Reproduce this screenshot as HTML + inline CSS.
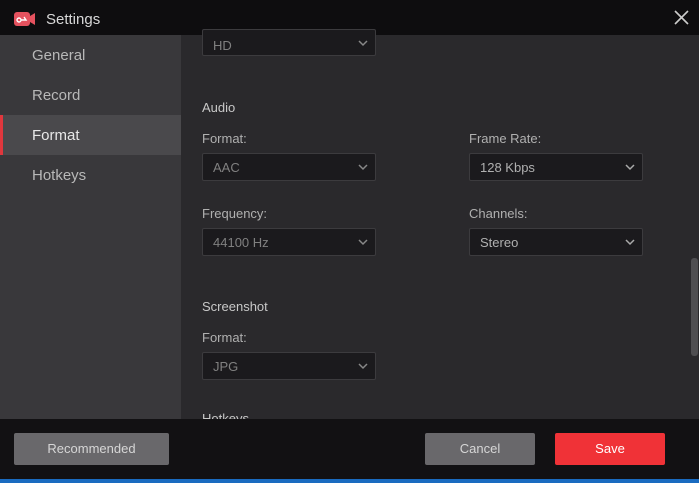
<!DOCTYPE html>
<html><head><style>
*{margin:0;padding:0;box-sizing:border-box}
body{width:699px;height:483px;overflow:hidden;background:#2a292c;font-family:"Liberation Sans",sans-serif;position:relative}
.a{position:absolute}
.title{left:0;top:0;width:699px;height:35px;background:#0e0d0f;color:#d8d8d8;font-size:15px}
.side{left:0;top:35px;width:181px;height:384px;background:#39383b}
.item{position:absolute;left:32px;color:#b8b8b8;font-size:15px}
.lbl{position:absolute;color:#c8c8c8;font-size:13px}
.dd{position:absolute;width:174px;height:28px;background:#1b1a1d;border:1px solid #3c3b3e;border-radius:2px;color:#808080;font-size:13px;padding:6px 0 0 10px}
.dd svg{position:absolute;right:7px;top:10px}
.foot{left:0;top:419px;width:699px;height:60px;background:#121113}
.btn{position:absolute;top:433px;height:32px;border-radius:2px;color:#d6d6d6;font-size:13px;text-align:center;line-height:32px;background:#69686b}
</style></head><body>
<div class="a title">
<svg class="a" style="left:14px;top:11px" width="22" height="16" viewBox="0 0 22 16"><rect x="0" y="1" width="16" height="14" rx="3" fill="#e5525f"/><path d="M16 5l5-3v12l-5-3z" fill="#e5525f"/><circle cx="5" cy="9" r="2" fill="none" stroke="#fff" stroke-width="1.4"/><path d="M7 9h5l-2-3" fill="none" stroke="#fff" stroke-width="1.4"/></svg>
<span class="a" style="left:46px;top:11px">Settings</span>
<svg class="a" style="left:674px;top:10px" width="15" height="15"><path d="M1 1l13 13M14 1L1 14" stroke="#ccc" stroke-width="1.6"/></svg>
</div>
<div class="a side">
<div class="item" style="top:12px">General</div>
<div class="item" style="top:52px">Record</div>
<div class="a" style="left:0;top:80px;width:181px;height:40px;background:#4a494c"></div>
<div class="a" style="left:0;top:80px;width:3px;height:40px;background:#e0373d"></div>
<div class="item" style="top:92px;color:#e8e8e8">Format</div>
<div class="item" style="top:132px">Hotkeys</div>
</div>
<div class="dd" style="left:202px;top:29px;height:27px;padding-top:8px">HD<svg width="10" height="7"><path d="M1 1l4 4 4-4" stroke="#888" stroke-width="1.5" fill="none"/></svg></div>
<div class="lbl" style="left:202px;top:100px">Audio</div>
<div class="lbl" style="left:202px;top:131px;color:#b0b0b0">Format:</div>
<div class="lbl" style="left:469px;top:131px;color:#b0b0b0">Frame Rate:</div>
<div class="dd" style="left:202px;top:153px">AAC<svg width="10" height="7"><path d="M1 1l4 4 4-4" stroke="#888" stroke-width="1.5" fill="none"/></svg></div>
<div class="dd" style="left:469px;top:153px;color:#b0b0b0">128 Kbps<svg width="10" height="7"><path d="M1 1l4 4 4-4" stroke="#aaa" stroke-width="1.5" fill="none"/></svg></div>
<div class="lbl" style="left:202px;top:206px;color:#b0b0b0">Frequency:</div>
<div class="lbl" style="left:469px;top:206px;color:#b0b0b0">Channels:</div>
<div class="dd" style="left:202px;top:228px">44100 Hz<svg width="10" height="7"><path d="M1 1l4 4 4-4" stroke="#888" stroke-width="1.5" fill="none"/></svg></div>
<div class="dd" style="left:469px;top:228px;color:#b0b0b0">Stereo<svg width="10" height="7"><path d="M1 1l4 4 4-4" stroke="#aaa" stroke-width="1.5" fill="none"/></svg></div>
<div class="lbl" style="left:202px;top:299px">Screenshot</div>
<div class="lbl" style="left:202px;top:330px;color:#b0b0b0">Format:</div>
<div class="dd" style="left:202px;top:352px">JPG<svg width="10" height="7"><path d="M1 1l4 4 4-4" stroke="#888" stroke-width="1.5" fill="none"/></svg></div>
<div class="lbl" style="left:202px;top:411px">Hotkeys</div>
<div class="a" style="left:691px;top:258px;width:7px;height:98px;background:#4f4e51;border-radius:3px"></div>
<div class="a foot"></div>
<div class="btn" style="left:14px;width:155px">Recommended</div>
<div class="btn" style="left:425px;width:110px">Cancel</div>
<div class="btn" style="left:555px;width:110px;background:#f03237;color:#fff">Save</div>
<div class="a" style="left:0;top:479px;width:699px;height:4px;background:#1a6bc0"></div>
</body></html>
